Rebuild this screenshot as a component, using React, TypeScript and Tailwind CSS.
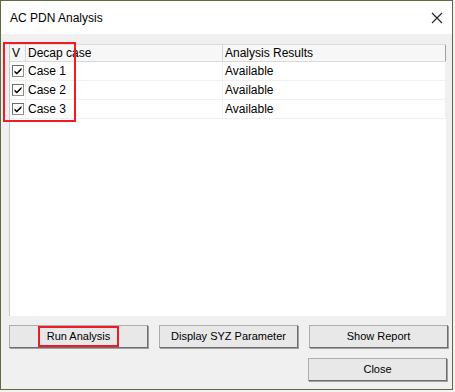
import React from "react";

const rows = ["Case 1", "Case 2", "Case 3"];

function Check() {
  return (
    <div className="w-[12px] h-[12px] bg-white border border-[#8e8f8f] border-t-[#6d6d6d] border-l-[#6d6d6d] flex items-center justify-center">
      <svg width="8" height="8" viewBox="0 0 8 8">
        <path d="M0.5 3.5 L2.8 5.6 L7.5 0.8 L7.5 3 L2.8 7.6 L0.5 5.6 Z" fill="#000" />
      </svg>
    </div>
  );
}

function Btn({ label, w }: { label: string; w: string }) {
  return (
    <div
      className={`${w} h-[23px] bg-[#e8e8e8] border border-[#adadad] border-r-[#6e6e6e] border-b-[#6e6e6e] shadow-[1px_1px_0_#a0a0a0] flex items-center justify-center text-[11px] text-black`}
    >
      {label}
    </div>
  );
}

export default function App() {
  return (
    <div
      className="w-[455px] h-[392px] bg-[#f2f2f2] relative overflow-hidden"
      style={{ fontFamily: '"Liberation Sans", Arial, sans-serif' }}
    >
      <div className="w-[453px] h-[390px] border border-[#5d6b3f] bg-[#f0f0f0] flex flex-col">
        <div className="h-[33px] bg-white flex items-center justify-between pl-[9px] pr-[9px] shrink-0">
          <span className="text-[12px] text-black">AC PDN Analysis</span>
          <svg width="12" height="12" viewBox="0 0 12 12">
            <path d="M1 1 L11 11 M11 1 L1 11" stroke="#222" strokeWidth="1.1" />
          </svg>
        </div>
        <div className="flex flex-col pl-[8px] pt-[10px]">
          <div className="w-[437px] h-[272px] bg-white border-l border-[#c8c8c8] flex flex-col">
            <div className="h-[18px] flex bg-[#f7f7f7] border-t border-b border-[#dadada] text-[12px] text-black">
              <div className="w-[16px] border-r border-[#d5d5d5] pl-[2px] leading-[16px]">V</div>
              <div className="w-[197px] border-r border-[#d5d5d5] pl-[2px] leading-[16px]">Decap case</div>
              <div className="w-[223px] border-r border-[#a0a0a0] pl-[2px] leading-[16px]">Analysis Results</div>
            </div>
            {rows.map((r) => (
              <div key={r} className="h-[19px] flex border-b border-[#f0f0f0] text-[12px] text-black">
                <div className="w-[16px] border-r border-[#f0f0f0] flex items-center pl-[2px]">
                  <Check />
                </div>
                <div className="w-[197px] border-r border-[#f0f0f0] pl-[2px] flex items-center">{r}</div>
                <div className="w-[223px] border-r border-[#f0f0f0] pl-[2px] flex items-center">Available</div>
              </div>
            ))}
          </div>
          <div className="flex mt-[9px] gap-[11px]">
            <Btn label="Run Analysis" w="w-[139px]" />
            <Btn label="Display SYZ Parameter" w="w-[139px]" />
            <Btn label="Show Report" w="w-[139px]" />
          </div>
          <div className="flex justify-end mt-[10px] pr-[5px]">
            <Btn label="Close" w="w-[139px]" />
          </div>
        </div>
      </div>
      <div className="absolute left-[3px] top-[42px] w-[73px] h-[80px] border-2 border-[#ee1c25]" />
      <div className="absolute left-[38px] top-[326px] w-[81px] h-[21px] border-2 border-[#ee1c25]" />
    </div>
  );
}
